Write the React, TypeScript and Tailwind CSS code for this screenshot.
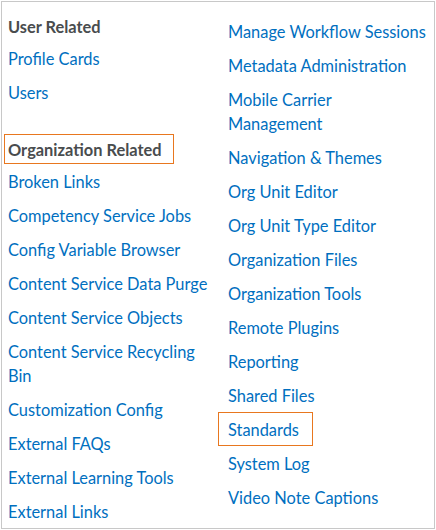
import React from "react";

const leftGroups: { title: string; outlined?: boolean; mt: string; items: React.ReactNode[] }[] = [
  { title: "User Related", mt: "mt-0", items: ["Profile Cards", "Users"] },
  {
    title: "Organization Related",
    outlined: true,
    mt: "mt-[25px]",
    items: [
      "Broken Links",
      "Competency Service Jobs",
      "Config Variable Browser",
      "Content Service Data Purge",
      "Content Service Objects",
      <>Content Service Recycling<br />Bin</>,
      "Customization Config",
      "External FAQs",
      "External Learning Tools",
      "External Links",
    ],
  },
];

const rightItems: { label: React.ReactNode; outlined?: boolean }[] = [
  { label: "Manage Workflow Sessions" },
  { label: "Metadata Administration" },
  { label: <>Mobile Carrier<br />Management</> },
  { label: "Navigation & Themes" },
  { label: "Org Unit Editor" },
  { label: "Org Unit Type Editor" },
  { label: "Organization Files" },
  { label: "Organization Tools" },
  { label: "Remote Plugins" },
  { label: "Reporting" },
  { label: "Shared Files" },
  { label: "Standards", outlined: true },
  { label: "System Log" },
  { label: "Video Note Captions" },
];

export default function App() {
  return (
    <div className="p-px bg-white" style={{ fontFamily: "Lato, 'Noto Sans', sans-serif" }}>
      <div className="w-[434px] h-[528px] border border-[#c8c8c8] bg-white overflow-hidden">
        <div className="grid grid-cols-[216px_1fr]">
          <div className="pl-[2px] pt-[9px] flex flex-col items-start">
            {leftGroups.map((g) => (
              <div key={g.title} className={`flex flex-col items-start ${g.mt}`}>
                <div
                  className={`border ${g.outlined ? "border-[#e8771f]" : "border-transparent"} pl-[3px] pr-[11px] pt-[3px] pb-[1px] text-[16.4px] leading-6 font-bold text-[#494c4e] whitespace-nowrap`}
                >
                  {g.title}
                </div>
                {g.items.map((it, i) => (
                  <div
                    key={i}
                    className="border border-transparent pl-[3px] pr-[9px] pt-[5px] pb-[3px] text-[16.4px] leading-6 text-[#006fbf] whitespace-nowrap"
                  >
                    {it}
                  </div>
                ))}
              </div>
            ))}
          </div>
          <div className="pt-[12px] flex flex-col items-start">
            {rightItems.map((it, i) => (
              <div
                key={i}
                className={`border ${it.outlined ? "border-[#e8771f]" : "border-transparent"} pl-[9px] pr-[13px] pt-[5px] pb-[3px] text-[16.4px] leading-6 text-[#006fbf] whitespace-nowrap`}
              >
                {it.label}
              </div>
            ))}
          </div>
        </div>
      </div>
    </div>
  );
}
